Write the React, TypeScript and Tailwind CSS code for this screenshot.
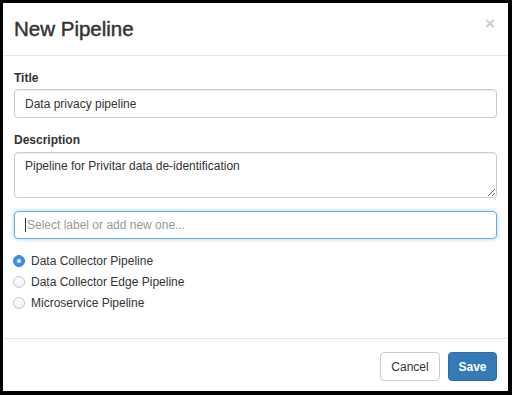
import React from 'react';

const font = { fontFamily: '"Liberation Sans", Arial, Helvetica, sans-serif' };

const options = [
  'Data Collector Pipeline',
  'Data Collector Edge Pipeline',
  'Microservice Pipeline',
];

function Radio({ checked }: { checked: boolean }) {
  if (checked) {
    return (
      <span className="flex h-[12px] w-[12px] items-center justify-center rounded-full bg-[#3b8ff6] border border-[#2f7fe6]">
        <span className="h-[4px] w-[4px] rounded-full bg-white" />
      </span>
    );
  }
  return (
    <span className="h-[12px] w-[12px] rounded-full border border-[#c4c4c4] bg-gradient-to-b from-white to-[#f2f2f2]" />
  );
}

export default function App() {
  const [selected, setSelected] = React.useState(0);

  return (
    <div
      className="w-[512px] h-[395px] bg-black pt-[3px] pl-[3px] pr-[4px] pb-[4px]"
      style={font}
    >
      <div className="flex h-full flex-col bg-white text-[#333]">
        {/* header */}
        <div className="relative flex h-[53px] items-center border-b border-[#e5e5e5] pl-[11px] pt-[1px]">
          <h4 className="text-[20.5px] font-normal leading-none [-webkit-text-stroke:0.45px_#333]">
            New Pipeline
          </h4>
          <button
            type="button"
            className="absolute right-[13px] top-[12px] text-[17px] font-bold leading-none text-[#cbcbcb]"
          >
            ×
          </button>
        </div>

        {/* body */}
        <div className="flex-1 px-[11px] pt-[14px]">
          <label className="block text-[12px] font-bold leading-[17px]">Title</label>
          <div className="mt-[2px] flex h-[29px] items-center rounded-[4px] border border-[#ccc] px-[10px] text-[12px] shadow-[inset_0_1px_1px_rgba(0,0,0,0.075)]">
            Data privacy pipeline
          </div>

          <label className="mt-[14px] block text-[12px] font-bold leading-[17px]">Description</label>
          <textarea
            readOnly
            value="Pipeline for Privitar data de-identification"
            className="mt-[3px] block h-[46px] w-full rounded-[4px] border border-[#ccc] px-[10px] py-[5px] text-[12px] leading-[16px] text-[#333] outline-none shadow-[inset_0_1px_1px_rgba(0,0,0,0.075)]"
          />

          <div className="mt-[13px] flex h-[28px] items-center rounded-[4px] border border-[#66afe9] px-[10px] text-[12px] shadow-[0_0_4px_rgba(102,175,233,0.6)]">
            <span className="mr-[1px] h-[14px] w-[1px] bg-[#333]" />
            <span className="text-[#999]">Select label or add new one...</span>
          </div>

          <div className="mt-[11px] flex flex-col">
            {options.map((o, i) => (
              <div
                key={o}
                className="-ml-[1px] flex h-[21px] cursor-pointer items-center gap-[6px] text-[12px]"
                onClick={() => setSelected(i)}
              >
                <Radio checked={selected === i} />
                <span>{o}</span>
              </div>
            ))}
          </div>
        </div>

        {/* footer */}
        <div className="flex justify-end gap-[8px] border-t border-[#e5e5e5] px-[11px] pt-[13px] pb-[10px]">
          <button
            type="button"
            className="h-[29px] w-[60px] rounded-[4px] border border-[#ccc] bg-white text-[12px] text-[#333]"
          >
            Cancel
          </button>
          <button
            type="button"
            className="h-[29px] w-[49px] rounded-[4px] border border-[#2e6da4] bg-[#337ab7] text-[12px] font-bold text-white"
          >
            Save
          </button>
        </div>
      </div>
    </div>
  );
}
